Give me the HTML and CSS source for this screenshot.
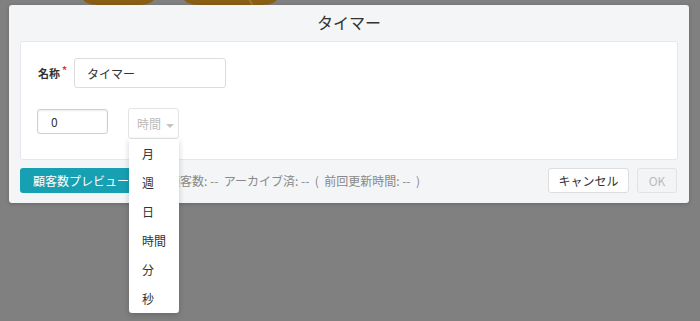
FILE: index.html
```html
<!DOCTYPE html>
<html lang="ja">
<head>
    <meta charset="UTF-8">
    <title>タイマー</title>
    <link rel="stylesheet" href="styles.css">
</head>
<body>
    <div class="backdrop">
        <div class="blob blob-a"></div>
        <div class="blob blob-b"></div>
    </div>

    <div class="modal">
        <div class="modal-title">タイマー</div>

        <div class="card">
            <div class="row name-row">
                <label class="name-label" for="name">名称<span class="req">*</span></label>
                <input type="text" id="name" class="text-input name-input" value="タイマー">
            </div>

            <div class="row timer-row">
                <input type="text" class="text-input num-input" value="0">
                <div class="select-wrap">
                    <div class="select">時間<span class="caret"></span></div>
                    <ul class="menu">
                        <li>月</li>
                        <li>週</li>
                        <li>日</li>
                        <li>時間</li>
                        <li>分</li>
                        <li>秒</li>
                    </ul>
                </div>
            </div>
        </div>

        <div class="footer">
            <button class="btn btn-preview">顧客数プレビュー</button>
            <span class="status">顧客数: --&nbsp; アーカイブ済: -- &nbsp;(&nbsp; 前回更新時間: -- &nbsp;)</span>
            <span class="spacer"></span>
            <button class="btn btn-cancel">キャンセル</button>
            <button class="btn btn-ok" disabled>OK</button>
        </div>
    </div>
</body>
</html>
```

FILE: styles.css
```css
body {
    margin: 0;
    background: #808080;
    font-family: "Noto Sans CJK JP", "Liberation Sans", sans-serif;
    color: #333;
    height: 321px;
    overflow: hidden;
}
.backdrop {
    position: absolute;
    top: 0;
    left: 0;
}
.blob {
    position: absolute;
    top: -20px;
    height: 25px;
    background: #8a5f14;
    border-radius: 0 0 16px 16px / 0 0 8px 8px;
}
.blob-a {
    left: 82px;
    width: 73px;
}
.blob-b {
    left: 183px;
    width: 95px;
    background: linear-gradient(60deg, #8a5f14 62%, #9a7434 63%, #9a7434 64%, #8a5f14 65%);
}

.modal {
    position: relative;
    margin: 5px 0 0 9px;
    width: 680px;
    height: 198px;
    box-sizing: border-box;
    background: #f4f5f7;
    border-radius: 3px;
    box-shadow: 0 1px 4px rgba(0, 0, 0, 0.2);
}
.modal-title {
    height: 36px;
    line-height: 35px;
    text-align: center;
    font-size: 16px;
    color: #333;
}
.card {
    margin: 0 11px;
    height: 119px;
    box-sizing: border-box;
    background: #fff;
    border: 1px solid #e6e7ea;
    border-radius: 3px;
    padding: 16px 16px 0 16px;
}
.row {
    display: flex;
    align-items: center;
}
.name-label {
    font-size: 11px;
    font-weight: bold;
    color: #333;
    width: 36px;
    margin-left: 1px;
}
.req {
    color: #d9363e;
    font-size: 10px;
    vertical-align: top;
    margin-left: 2px;
    position: relative;
    top: -3px;
}
.text-input {
    box-sizing: border-box;
    border: 1px solid #dcdcdc;
    border-radius: 3px;
    font-family: inherit;
    font-size: 12px;
    color: #333;
    outline: none;
    background: #fff;
}
.name-input {
    width: 152px;
    height: 30px;
    padding: 0 12px;
    font-size: 12px;
}
.timer-row {
    margin-top: 20px;
    align-items: flex-start;
}
.num-input {
    width: 71px;
    height: 25px;
    margin-top: 1px;
    padding: 0 13px;
    border-color: #cfcfcf;
    box-shadow: inset 0 1px 2px rgba(0, 0, 0, 0.08);
}
.select-wrap {
    position: relative;
    margin-left: 20px;
}
.select {
    width: 51px;
    height: 31px;
    box-sizing: border-box;
    border: 1px solid #e3e3e3;
    border-radius: 3px;
    background: #fff;
    color: #bbb;
    font-size: 12px;
    line-height: 29px;
    padding-left: 8px;
}
.caret {
    display: inline-block;
    margin-left: 5px;
    vertical-align: middle;
    border-left: 4px solid transparent;
    border-right: 4px solid transparent;
    border-top: 4px solid #c4c4c4;
}
.menu {
    position: absolute;
    top: 31px;
    left: 1px;
    width: 50px;
    margin: 0;
    padding: 0;
    list-style: none;
    background: #fff;
    border-radius: 0 0 3px 3px;
    box-shadow: 0 2px 6px rgba(0, 0, 0, 0.18);
    z-index: 10;
}
.menu li {
    height: 29px;
    line-height: 30px;
    padding-left: 13px;
    font-size: 12px;
    color: #333;
}

.footer {
    display: flex;
    align-items: center;
    padding: 8px 12px 0 11px;
}
.btn {
    height: 25px;
    box-sizing: border-box;
    border-radius: 3px;
    font-family: inherit;
    font-size: 12px;
    padding: 0;
    cursor: pointer;
}
.btn-preview {
    width: 116px;
    background: #17a0b2;
    border: none;
    color: #fff;
    text-align: left;
    padding-left: 13px;
}
.status {
    margin-left: 32px;
    font-size: 12px;
    color: #888;
    white-space: nowrap;
}
.spacer {
    flex: 1;
}
.btn-cancel {
    width: 81px;
    background: #fff;
    border: 1px solid #ddd;
    color: #333;
}
.btn-ok {
    width: 40px;
    margin-left: 8px;
    background: #f3f4f6;
    border: 1px solid #e2e2e2;
    color: #bbb;
}
```
